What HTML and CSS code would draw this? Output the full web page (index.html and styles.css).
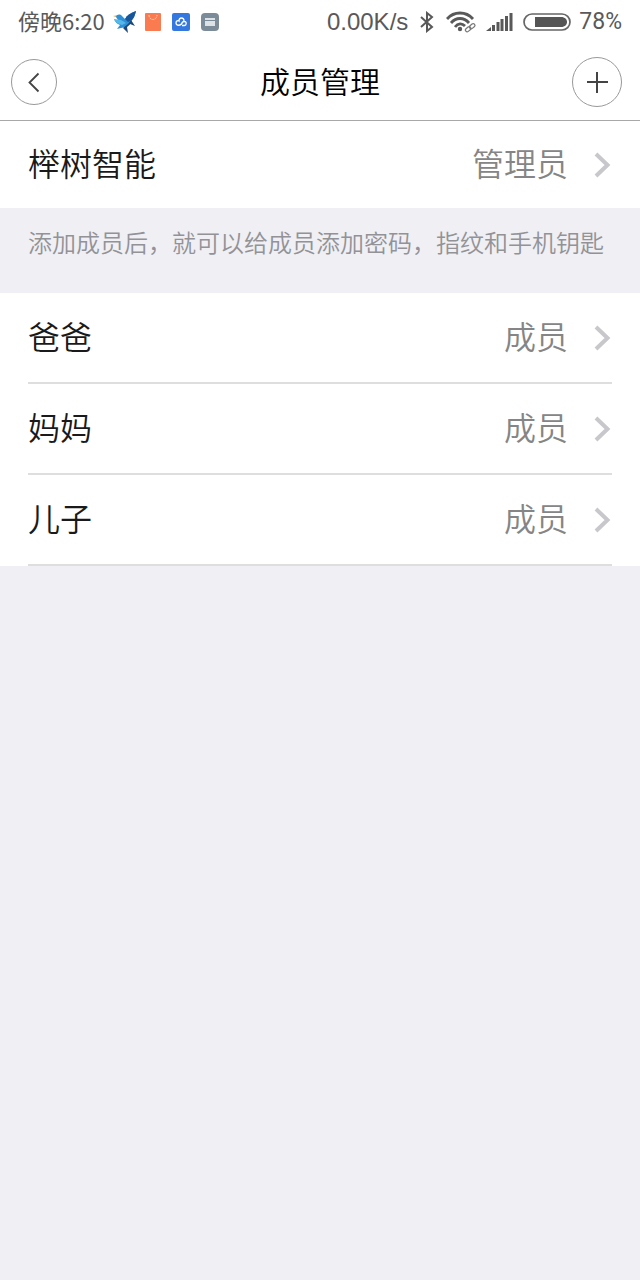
FILE: index.html
```
<!DOCTYPE html>
<html lang="zh-CN">
<head>
<meta charset="utf-8">
<meta name="viewport" content="width=device-width, initial-scale=1">
<title>成员管理</title>
<link rel="stylesheet" href="styles.css">
</head>
<body>
<div class="status">
  <span class="time">傍晚6:20</span>
  <svg class="bird" width="24" height="24" viewBox="0 0 24 24" aria-hidden="true">
    <path fill="#e8a13c" d="M0 6l6-1v3z"/>
    <path fill="#2f8fd6" d="M3 7c1-3 4-3 6-1l3 3c2-4 6-6 11-8-1 4-2 7-4 9-1 4-3 6-6 7l-5 1-4 1 3-4c-3-1-5-3-6-6 1 1 3 1 4 1z"/>
    <path fill="#17569b" d="M12 9c2-4 6-6 11-8-1 4-2 7-4 9l-4 2z"/>
    <path fill="#1d4877" d="M18 10l4 6-5-2-3 3 1 6-5-5 5-4z"/>
    <path fill="#56b8e8" d="M1 9l7 1 5 3-4 2c-4-1-7-3-8-6z"/>
  </svg>
  <svg width="16" height="18" viewBox="0 0 16 18" aria-hidden="true">
    <rect width="16" height="18" rx="1" fill="#fb7b50"/>
    <path d="M4 2c0 6 8 6 8 0" fill="none" stroke="#ffd5bd" stroke-dasharray="2 1"/>
  </svg>
  <svg class="cloud" width="18" height="18" viewBox="0 0 18 18" aria-hidden="true">
    <rect width="18" height="18" rx="2" fill="#3478df"/>
    <path d="M10 10c-1 3-6 3-6 0 0-2 2-3 3-2 0-4 5-4 5 0M10 12.500h2.500c2 0 2.500-4 0-4-1.500 0-2.500 1-2.500 2" fill="none" stroke="#fff" stroke-width="1.300"/>
  </svg>
  <svg class="doc" width="18" height="18" viewBox="0 0 18 18" aria-hidden="true">
    <rect width="18" height="18" rx="4" fill="#7c8b98"/>
    <path d="M4 5h10v2H4zM4 8h10v5H4z" fill="#dce2e6"/>
  </svg>
  <span class="speed">0.00K/s</span>
  <svg class="bluetooth" width="16" height="22" viewBox="0 0 16 22" fill="none" stroke="#595959" stroke-width="2" aria-hidden="true">
    <path d="M2 6l11 10-5 4V2l5 4L2 16"/>
  </svg>
  <svg class="wifi" width="30" height="22" viewBox="0 0 30 22" fill="none" aria-hidden="true">
    <path d="M1 8C8 0 20 0 27 8M5 12c5-6 13-6 18 0M9 16c3-4 7-4 10-1" stroke="#595959" stroke-width="2.800"/>
    <circle cx="14" cy="18" r="2.200" fill="#595959"/>
    <path d="M19 20l9-8" stroke="#fff" stroke-width="5"/>
    <g stroke="#777" stroke-width="1.200"><rect x="-3" y="-1.500" width="6" height="3.500" rx="1.700" transform="translate(22 18) rotate(-40)"/><rect x="-3" y="-1.500" width="6" height="3.500" rx="1.700" transform="translate(26 15) rotate(-40)"/></g>
  </svg>
  <svg class="signal" width="27" height="18" viewBox="0 0 27 18" fill="#595959" aria-hidden="true">
    <path d="M0 18l5-4v4zM6 12h3v6H6zM10.500 9h3v9h-3zM14.500 6h3v12h-3zM19 3h3v15h-3zM23.500 0h3v18h-3z"/>
  </svg>
  <svg class="battery" width="48" height="18" viewBox="0 0 48 18" aria-hidden="true">
    <rect x="1" y="1" width="46" height="16" rx="8" fill="none" stroke="#666" stroke-width="1.700"/>
    <path d="M12 4h26c8 0 8 10 0 10H12z" fill="#555"/>
  </svg>
  <span class="percent">78%</span>
</div>
<header class="header">
  <button class="round back" type="button" aria-label="返回">
    <svg width="44" height="44" viewBox="0 0 44 44" fill="none" stroke="#444" stroke-width="1.800" aria-hidden="true"><path d="M26.500 13.500l-9 9 9 9"/></svg>
  </button>
  <h1 class="title">成员管理</h1>
  <button class="round add" type="button" aria-label="添加成员">
    <svg width="48" height="48" viewBox="0 0 48 48" fill="none" stroke="#444" stroke-width="2" aria-hidden="true"><path d="M14 24h21M24 14v21"/></svg>
  </button>
</header>
<main>
  <button class="row owner" type="button">
    <span class="name">榉树智能</span><span class="role">管理员</span>
    <svg class="chevron" width="18" height="26" viewBox="0 0 18 26" aria-hidden="true"><path d="M2 2l11.500 11L2 24"/></svg>
  </button>
  <p class="note">添加成员后，就可以给成员添加密码，指纹和手机钥匙</p>
  <div class="members">
    <button class="row member" type="button">
      <span class="name">爸爸</span><span class="role">成员</span>
      <svg class="chevron" width="18" height="26" viewBox="0 0 18 26" aria-hidden="true"><path d="M2 2l11.500 11L2 24"/></svg>
    </button>
    <button class="row member" type="button">
      <span class="name">妈妈</span><span class="role">成员</span>
      <svg class="chevron" width="18" height="26" viewBox="0 0 18 26" aria-hidden="true"><path d="M2 2l11.500 11L2 24"/></svg>
    </button>
    <button class="row member" type="button">
      <span class="name">儿子</span><span class="role">成员</span>
      <svg class="chevron" width="18" height="26" viewBox="0 0 18 26" aria-hidden="true"><path d="M2 2l11.500 11L2 24"/></svg>
    </button>
  </div>
</main>
</body>
</html>
```

FILE: styles.css
```
* {
  box-sizing: border-box;
}

body {
  margin: 0;
  min-height: 100vh;
  background: #efeff4;
  font-family: "Noto Sans CJK SC", sans-serif;
  font-weight: 350;
}

button {
  margin: 0;
  border: 0;
  font: inherit;
  cursor: pointer;
}

svg {
  display: block;
  flex: none;
}

.status {
  display: flex;
  align-items: center;
  height: 44px;
  padding: 0 18px;
  background: #fff;
  color: #595959;
  font-family: Roboto, "Noto Sans CJK SC", sans-serif;
  font-size: 24px;
  font-weight: 400;
  line-height: 32px;
  white-space: nowrap;
}

.time {
  padding-bottom: 4px;
  font-size: 22px;
  font-family: "Noto Sans CJK SC", sans-serif;
}

.bird {
  margin: 0 8px;
}

.cloud,
.doc {
  margin-left: 11px;
}

.speed {
  margin-left: auto;
  font-family: "Liberation Sans", sans-serif;
}

.bluetooth {
  margin: 0 11px;
}

.signal {
  margin: 0 10px;
}

.percent {
  margin-left: 8px;
  font-size: 23px;
}

.header {
  display: grid;
  grid-template-columns: 1fr auto 1fr;
  align-items: center;
  height: 77px;
  background: #fff;
  border-bottom: 1px solid #a8a8a8;
}

.title {
  margin: 0;
  padding-bottom: 4px;
  color: #000;
  font-size: 30px;
  font-weight: 350;
  line-height: 40px;
}

.round {
  display: flex;
  align-items: center;
  justify-content: center;
  padding: 0;
  background: #fff;
  border: 1px solid #999;
  border-radius: 50%;
}

.back {
  width: 46px;
  height: 46px;
  margin-left: 11px;
}

.add {
  justify-self: end;
  width: 50px;
  height: 50px;
  margin-right: 18px;
}

.row {
  display: flex;
  align-items: center;
  width: 100%;
  background: #fff;
  text-align: left;
  font-size: 32px;
  line-height: 40px;
}

.owner {
  height: 87px;
  padding: 0 28px;
}

.members {
  padding: 0 28px;
  background: #fff;
}

.member {
  height: 91px;
  padding: 0;
  border-bottom: 2px solid #dedede;
}

.name,
.role {
  padding-bottom: 5px;
}

.name {
  flex: 1;
  color: #1a1a1a;
}

.role {
  margin-right: 26px;
  color: #858585;
}

.chevron {
  fill: none;
  stroke: #c7c7cc;
  stroke-width: 4;
}

.note {
  margin: 0;
  padding: 16px 28px 33px;
  color: #929297;
  font-size: 24px;
  line-height: 36px;
}
```
